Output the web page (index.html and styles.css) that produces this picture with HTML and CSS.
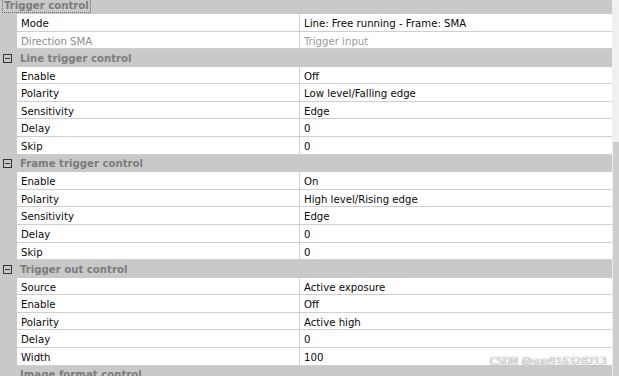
FILE: index.html
```html
<!DOCTYPE html>
<html>
<head>
<meta charset="utf-8">
<link rel="stylesheet" href="styles.css">
</head>
<body>
<div class="frame">
  <div class="grid">
    <div class="hdr top"><span class="focus">Trigger control</span></div>
    <div class="row"><div class="gut"></div><div class="name">Mode</div><div class="val">Line: Free running - Frame: SMA</div></div>
    <div class="row dim"><div class="gut"></div><div class="name">Direction SMA</div><div class="val">Trigger input</div></div>

    <div class="hdr"><span class="box"></span><span>Line trigger control</span></div>
    <div class="row"><div class="gut"></div><div class="name">Enable</div><div class="val">Off</div></div>
    <div class="row"><div class="gut"></div><div class="name">Polarity</div><div class="val">Low level/Falling edge</div></div>
    <div class="row"><div class="gut"></div><div class="name">Sensitivity</div><div class="val">Edge</div></div>
    <div class="row"><div class="gut"></div><div class="name">Delay</div><div class="val">0</div></div>
    <div class="row"><div class="gut"></div><div class="name">Skip</div><div class="val">0</div></div>

    <div class="hdr"><span class="box"></span><span>Frame trigger control</span></div>
    <div class="row"><div class="gut"></div><div class="name">Enable</div><div class="val">On</div></div>
    <div class="row"><div class="gut"></div><div class="name">Polarity</div><div class="val">High level/Rising edge</div></div>
    <div class="row"><div class="gut"></div><div class="name">Sensitivity</div><div class="val">Edge</div></div>
    <div class="row"><div class="gut"></div><div class="name">Delay</div><div class="val">0</div></div>
    <div class="row"><div class="gut"></div><div class="name">Skip</div><div class="val">0</div></div>

    <div class="hdr"><span class="box"></span><span>Trigger out control</span></div>
    <div class="row"><div class="gut"></div><div class="name">Source</div><div class="val">Active exposure</div></div>
    <div class="row"><div class="gut"></div><div class="name">Enable</div><div class="val">Off</div></div>
    <div class="row"><div class="gut"></div><div class="name">Polarity</div><div class="val">Active high</div></div>
    <div class="row"><div class="gut"></div><div class="name">Delay</div><div class="val">0</div></div>
    <div class="row"><div class="gut"></div><div class="name">Width</div><div class="val">100</div></div>

    <div class="hdr plain"><span>Image format control</span></div>
  </div>
  <div class="scroll"><div class="thumb"></div></div>
  <div class="mark">CSDN @sun916328213</div>
</div>
</body>
</html>
```

FILE: styles.css
```css
html, body {
  margin: 0;
  padding: 0;
  background: #ffffff;
}
.frame {
  position: relative;
  width: 619px;
  height: 376px;
  overflow: hidden;
  display: flex;
  font-family: "DejaVu Sans Condensed", "DejaVu Sans", sans-serif;
  font-size: 11.3px;
  color: #0a0a0a;
}
.grid {
  flex: 1;
  display: flex;
  flex-direction: column;
  margin-top: -3.6px;
  background: #c9c9c9;
}
.row {
  display: flex;
  height: 17.58px;
  flex: none;
}
.gut {
  width: 17px;
  background: #c9c9c9;
  flex: none;
}
.name, .val {
  background: #fff;
  border-bottom: 1px solid #cfcfcf;
  box-sizing: border-box;
  padding-left: 4px;
  padding-top: 1px;
  line-height: 17px;
  white-space: nowrap;
}
.name {
  width: 282px;
  flex: none;
}
.val {
  flex: 1;
  border-left: 1px solid #cfcfcf;
  padding-left: 4px;
}
.dim .name { color: #8c8c8c; }
.dim .val { color: #9a9a9a; }
.hdr {
  height: 17.58px;
  flex: none;
  display: flex;
  align-items: center;
  padding-top: 1px;
  box-sizing: border-box;
  background: #c9c9c9;
  color: #7c7c7c;
  font-weight: bold;
  white-space: nowrap;
}
.hdr.top {
  padding-left: 2px;
  align-items: flex-end;
  padding-top: 0;
  padding-bottom: 1px;
}
.focus {
  border: 1px dotted #6a6a6a;
  padding: 0 1px;
  line-height: 13px;
  font-weight: bold;
}
.box {
  width: 9px;
  height: 9px;
  box-sizing: border-box;
  border: 1px solid #333;
  margin-left: 3px;
  margin-right: 8px;
  position: relative;
  flex: none;
}
.box::after {
  content: "";
  position: absolute;
  left: 1px;
  right: 1px;
  top: 3px;
  height: 1px;
  background: #333;
}
.hdr.plain {
  padding-left: 20px;
}
.scroll {
  width: 7px;
  flex: none;
  background: #f0f0f0;
  display: flex;
  flex-direction: column;
  padding-top: 142px;
  box-sizing: border-box;
}
.thumb {
  flex: 1;
  margin-left: 1px;
  background: #cdcdcd;
}
.mark {
  position: absolute;
  left: 490px;
  top: 356px;
  color: #fff;
  font-family: "DejaVu Sans", sans-serif;
  font-size: 10px;
  text-shadow: 0 0 1px #777, 0 0 1px #777;
}
```
